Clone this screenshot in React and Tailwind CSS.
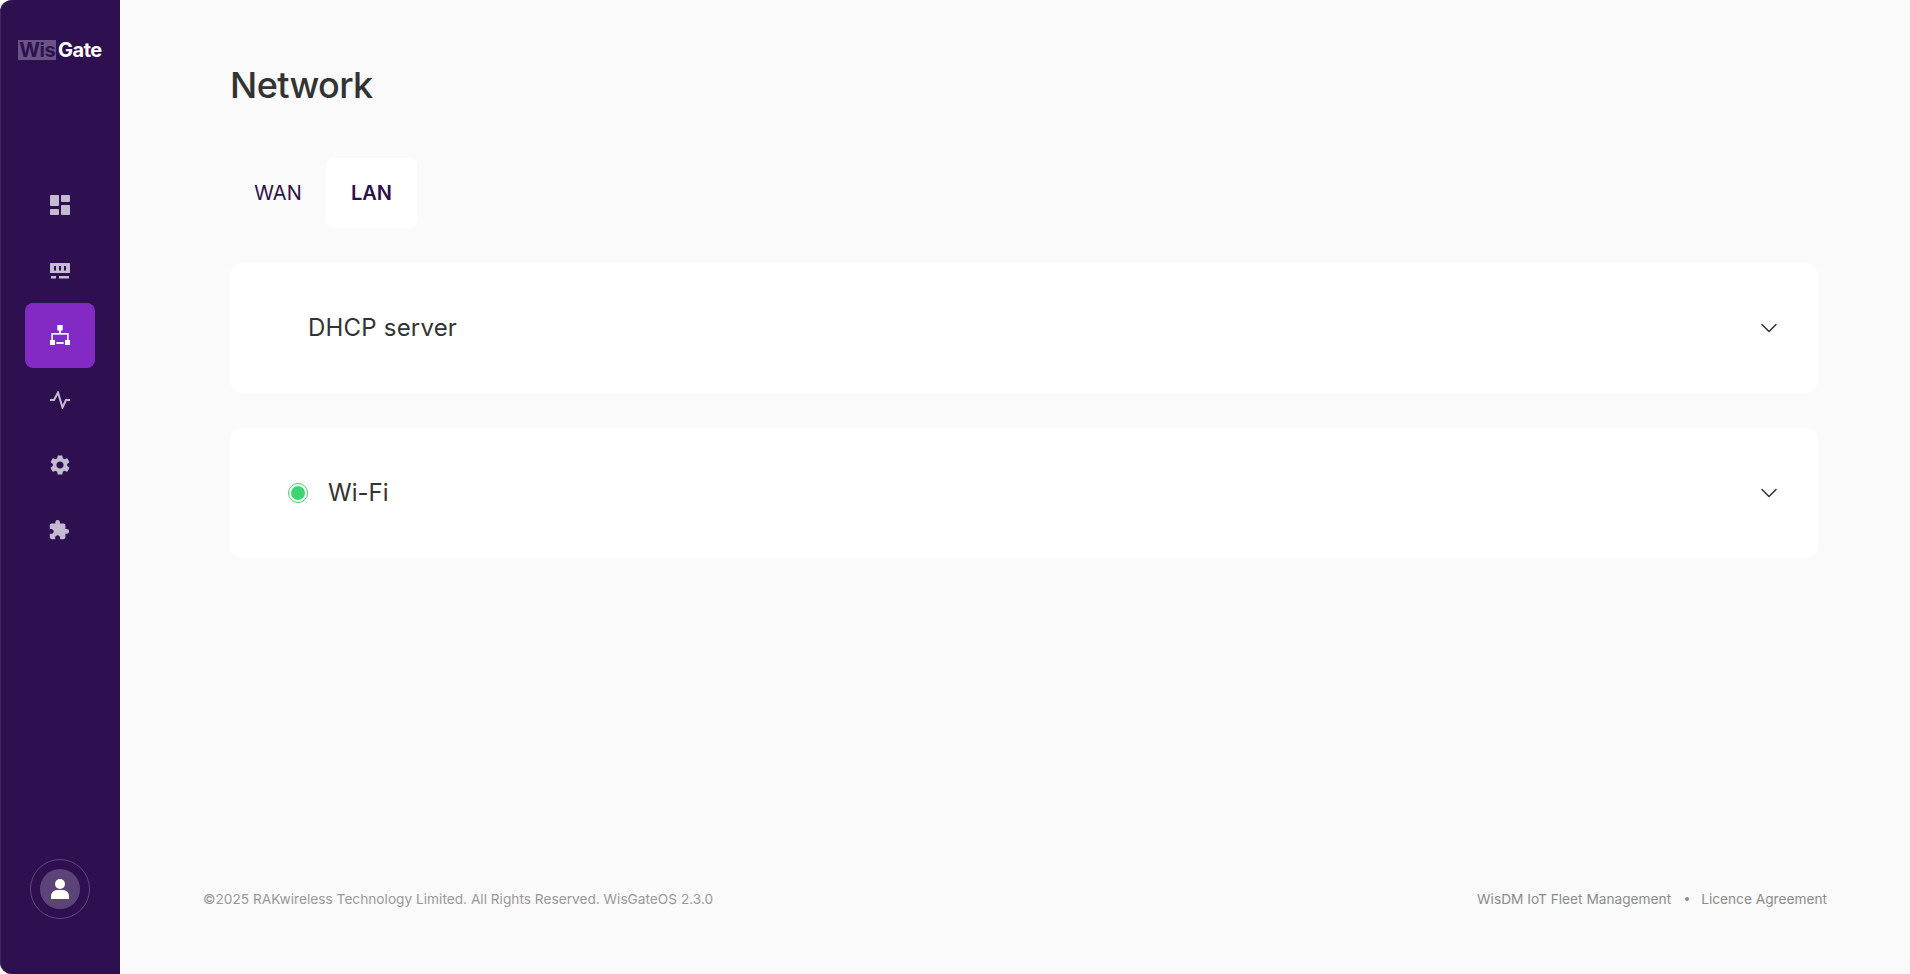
import React from 'react';
import { ChevronDown } from 'lucide-react';
import { MdExtension, MdSettings } from 'react-icons/md';

function DashboardIcon() {
  return (
    <svg width="20" height="20" viewBox="0 0 20 20" fill="currentColor">
      <rect x="0" y="0" width="9" height="11" rx="1" />
      <rect x="11" y="0" width="9" height="7" rx="1" />
      <rect x="0" y="14" width="9" height="6" rx="1" />
      <rect x="11" y="10" width="9" height="10" rx="1" />
    </svg>
  );
}

function MemoryIcon() {
  return (
    <svg width="20" height="16" viewBox="0 0 20 16" fill="currentColor" className="mt-[2px]">
      <path fillRule="evenodd" d="M1 0h18a1 1 0 0 1 1 1v9H0V1a1 1 0 0 1 1-1zM4 3v4.5h2V3zM9 3v4.5h2V3zM14 3v4.5h2V3z" />
      <rect x="1" y="13" width="5" height="2.5" />
      <rect x="9" y="13" width="10" height="2.5" />
    </svg>
  );
}

function NetworkIcon() {
  return (
    <svg width="20" height="20" viewBox="0 0 20 20" fill="currentColor">
      <rect x="7.3" y="0" width="5.4" height="5.5" />
      <rect x="9" y="5" width="2" height="4" />
      <path d="M1.3 8h17.4v7h-1.7V9.7H3V15H1.3z" opacity="0.9" />
      <rect x="0" y="15" width="5" height="5" />
      <rect x="15" y="15" width="5" height="5" />
      <rect x="6.3" y="17" width="7.4" height="2" opacity="0.9" />
    </svg>
  );
}

function ActivityIcon() {
  return (
    <svg width="20" height="18" viewBox="0 0 20 18" fill="none" stroke="currentColor" strokeWidth="2">
      <path d="M0 9h4L8 1.5 12.5 16.5 16 9h4" />
    </svg>
  );
}

function NavItem({ active, children }) {
  return (
    <div className={`w-[70px] h-[65px] pb-[1px] flex items-center justify-center rounded-lg ${active ? 'bg-[#8329c4] text-white' : 'text-[#c4bbd2]'}`}>
      {children}
    </div>
  );
}

function AccordionCard({ children }) {
  return (
    <div className="h-[130px] bg-white rounded-xl flex items-center justify-between pr-[35px]">
      {children}
      <ChevronDown size={28} strokeWidth={1.3} className="text-[#333333]" />
    </div>
  );
}

export default function App() {
  return (
    <div className="h-screen flex bg-[#fafafa] font-['Inter',sans-serif]">
      {/* Sidebar */}
      <aside className="w-[120px] h-full flex-none flex flex-col items-center bg-[#2e1050] shadow-[inset_1px_0_0_#43285f] rounded-l-xl">
        <div className="mt-[40px] h-[20px] flex items-center text-[20px] font-bold leading-none tracking-[-0.5px]">
          <span className="h-[20px] px-[1px] bg-[#6a5486] text-[#2e1050] flex items-center">Wis</span>
          <span className="ml-[2px] text-white">Gate</span>
        </div>
        <nav className="mt-[113px] flex flex-col">
          <NavItem><DashboardIcon /></NavItem>
          <NavItem><MemoryIcon /></NavItem>
          <NavItem active><NetworkIcon /></NavItem>
          <NavItem><ActivityIcon /></NavItem>
          <NavItem><MdSettings size={24} /></NavItem>
          <NavItem><MdExtension size={22} className="-translate-x-[1px]" /></NavItem>
        </nav>
        <div className="mt-auto mb-[55px] w-[60px] h-[60px] rounded-full border border-[#5d4678] flex items-center justify-center">
          <div className="w-[40px] h-[40px] rounded-full bg-[#5c4478] flex flex-col items-center justify-center">
            <span className="w-[10px] h-[10px] rounded-full bg-white" />
            <span className="mt-[1px] w-[18px] h-[9px] rounded-t-[6px] bg-white" />
          </div>
        </div>
      </aside>

      {/* Main */}
      <main className="flex-1 flex flex-col min-w-0">
        <div className="pl-[110px] pr-[92px] flex-1">
          <h1 className="mt-[62px] text-[36px] leading-[46px] font-medium tracking-[-0.6px] text-[#333333]">Network</h1>
          <div className="mt-[50px] flex text-[20px] text-[#2e1050]">
            <div className="w-[96px] h-[70px] flex items-center justify-center">WAN</div>
            <div className="w-[91px] h-[70px] flex items-center justify-center bg-white rounded-lg font-semibold">LAN</div>
          </div>
          <div className="mt-[35px] flex flex-col gap-[35px]">
            <AccordionCard>
              <span className="ml-[78px] text-[24px] tracking-[0.2px] text-[#333333]">DHCP server</span>
            </AccordionCard>
            <AccordionCard>
              <div className="ml-[58px] flex items-center">
                <span className="w-[20px] h-[20px] rounded-full border border-[#3bd671] flex items-center justify-center">
                  <span className="w-[14px] h-[14px] rounded-full bg-[#3bd671]" />
                </span>
                <span className="ml-[20px] text-[24px] text-[#333333]">Wi-Fi</span>
              </div>
            </AccordionCard>
          </div>
        </div>
        <footer className="pl-[83px] pr-[83px] mb-[65px] flex justify-between text-[13.7px] leading-[20px] text-[#999999]">
          <span>©2025 RAKwireless Technology Limited. All Rights Reserved. WisGateOS 2.3.0</span>
          <div className="flex items-center text-[#8c8c8c]">
            <span>WisDM IoT Fleet Management</span>
            <span className="ml-[14px] mr-[12px] w-[4px] h-[4px] rounded-full bg-[#8c8c8c]" />
            <span>Licence Agreement</span>
          </div>
        </footer>
      </main>
    </div>
  );
}
